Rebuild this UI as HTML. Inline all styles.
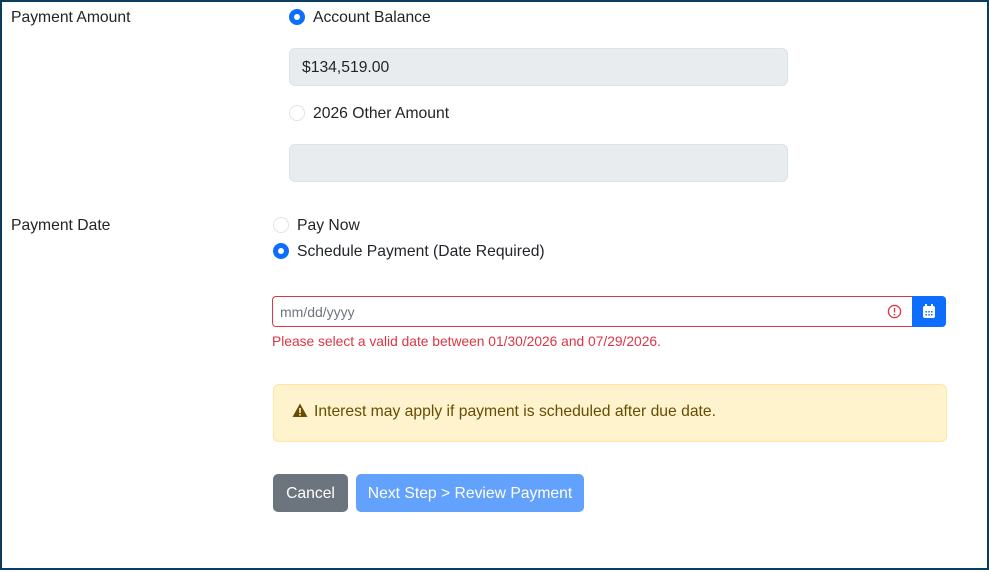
<!DOCTYPE html>
<html><head><style>
*{box-sizing:border-box;margin:0;padding:0}
body{width:989px;height:572px;background:#fff;font-family:"Liberation Sans",sans-serif;color:#212529;position:relative;overflow:hidden}
.frame{position:absolute;left:0;top:0;width:989px;height:570px;border:2px solid #0b3c5d}
.a{position:absolute;white-space:nowrap}
.lbl{font-size:15.7px}
.radio{position:absolute;width:16px;height:16px;border-radius:50%;border:1px solid #dee2e6;background:#fff}
.radio.on{background:#0d6efd;border-color:#0d6efd}
.radio.on::after{content:"";position:absolute;left:4px;top:4px;width:6px;height:6px;border-radius:50%;background:#fff}
.inp{position:absolute;background:#e9ecef;border:1px solid #dee2e6;border-radius:6px}
</style></head><body>
<div class="frame"></div>
<div class="a lbl" style="left:11px;top:9px">Payment Amount</div>
<div class="radio on" style="left:289px;top:9px"></div>
<div class="a lbl" style="left:313px;top:9px">Account Balance</div>
<div class="inp" style="left:289px;top:48px;width:499px;height:38px"></div>
<div class="a lbl" style="left:302px;top:59px">$134,519.00</div>
<div class="radio" style="left:289px;top:105px"></div>
<div class="a lbl" style="left:313px;top:105px">2026 Other Amount</div>
<div class="inp" style="left:289px;top:144px;width:499px;height:38px"></div>

<div class="a lbl" style="left:11px;top:217px">Payment Date</div>
<div class="radio" style="left:273px;top:217px"></div>
<div class="a lbl" style="left:297px;top:217px">Pay Now</div>
<div class="radio on" style="left:273px;top:243px"></div>
<div class="a lbl" style="left:297px;top:243px">Schedule Payment (Date Required)</div>

<div class="a" style="left:272px;top:296px;width:641px;height:31px;border:1px solid #dc3545;border-radius:4px 0 0 4px"></div>
<div class="a" style="left:280px;top:304px;font-size:14px;color:#6c757d">mm/dd/yyyy</div>
<svg class="a" style="left:887px;top:304px" width="15" height="15" viewBox="0 0 16 16"><circle cx="8" cy="8" r="6.5" fill="none" stroke="#dc3545" stroke-width="1.4"/><rect x="7.3" y="4" width="1.4" height="5" fill="#dc3545"/><circle cx="8" cy="11.3" r=".9" fill="#dc3545"/></svg>
<div class="a" style="left:912px;top:296px;width:34px;height:31px;background:#0d6efd;border-radius:0 4px 4px 0"></div>
<svg class="a" style="left:922px;top:304px" width="14" height="15" viewBox="0 0 14 15"><rect x="3" y="0" width="2" height="3" fill="#fff"/><rect x="9" y="0" width="2" height="3" fill="#fff"/><rect x="1" y="2" width="12" height="12" rx="2" fill="#fff"/><g fill="#0d6efd"><rect x="3.5" y="7" width="1.5" height="1.5"/><rect x="6.3" y="7" width="1.5" height="1.5"/><rect x="9" y="7" width="1.5" height="1.5"/><rect x="3.5" y="10" width="1.5" height="1.5"/><rect x="6.3" y="10" width="1.5" height="1.5"/><rect x="9" y="10" width="1.5" height="1.5"/></g></svg>
<div class="a" style="left:272px;top:334px;font-size:13.8px;color:#dc3545">Please select a valid date between 01/30/2026 and 07/29/2026.</div>

<div class="a" style="left:273px;top:384px;width:674px;height:58px;background:#fff3cd;border:1px solid #ffe69c;border-radius:6px"></div>
<svg class="a" style="left:292px;top:403px" width="16" height="15" viewBox="0 0 16 15"><path d="M8 0.5L15.5 14H0.5Z" fill="#664d03"/><rect x="7.2" y="5" width="1.6" height="5" fill="#fff3cd"/><rect x="7.2" y="11" width="1.6" height="1.6" fill="#fff3cd"/></svg>
<div class="a lbl" style="left:314px;top:403px;color:#664d03">Interest may apply if payment is scheduled after due date.</div>

<div class="a" style="left:273px;top:474px;width:75px;height:38px;background:#6c757d;border-radius:5px;color:#fff;font-size:15.7px;text-align:center;line-height:40px">Cancel</div>
<div class="a" style="left:356px;top:474px;width:228px;height:38px;background:#62a1fc;border-radius:5px;color:#fff;font-size:15.7px;text-align:center;line-height:40px">Next Step &gt; Review Payment</div>
</body></html>
